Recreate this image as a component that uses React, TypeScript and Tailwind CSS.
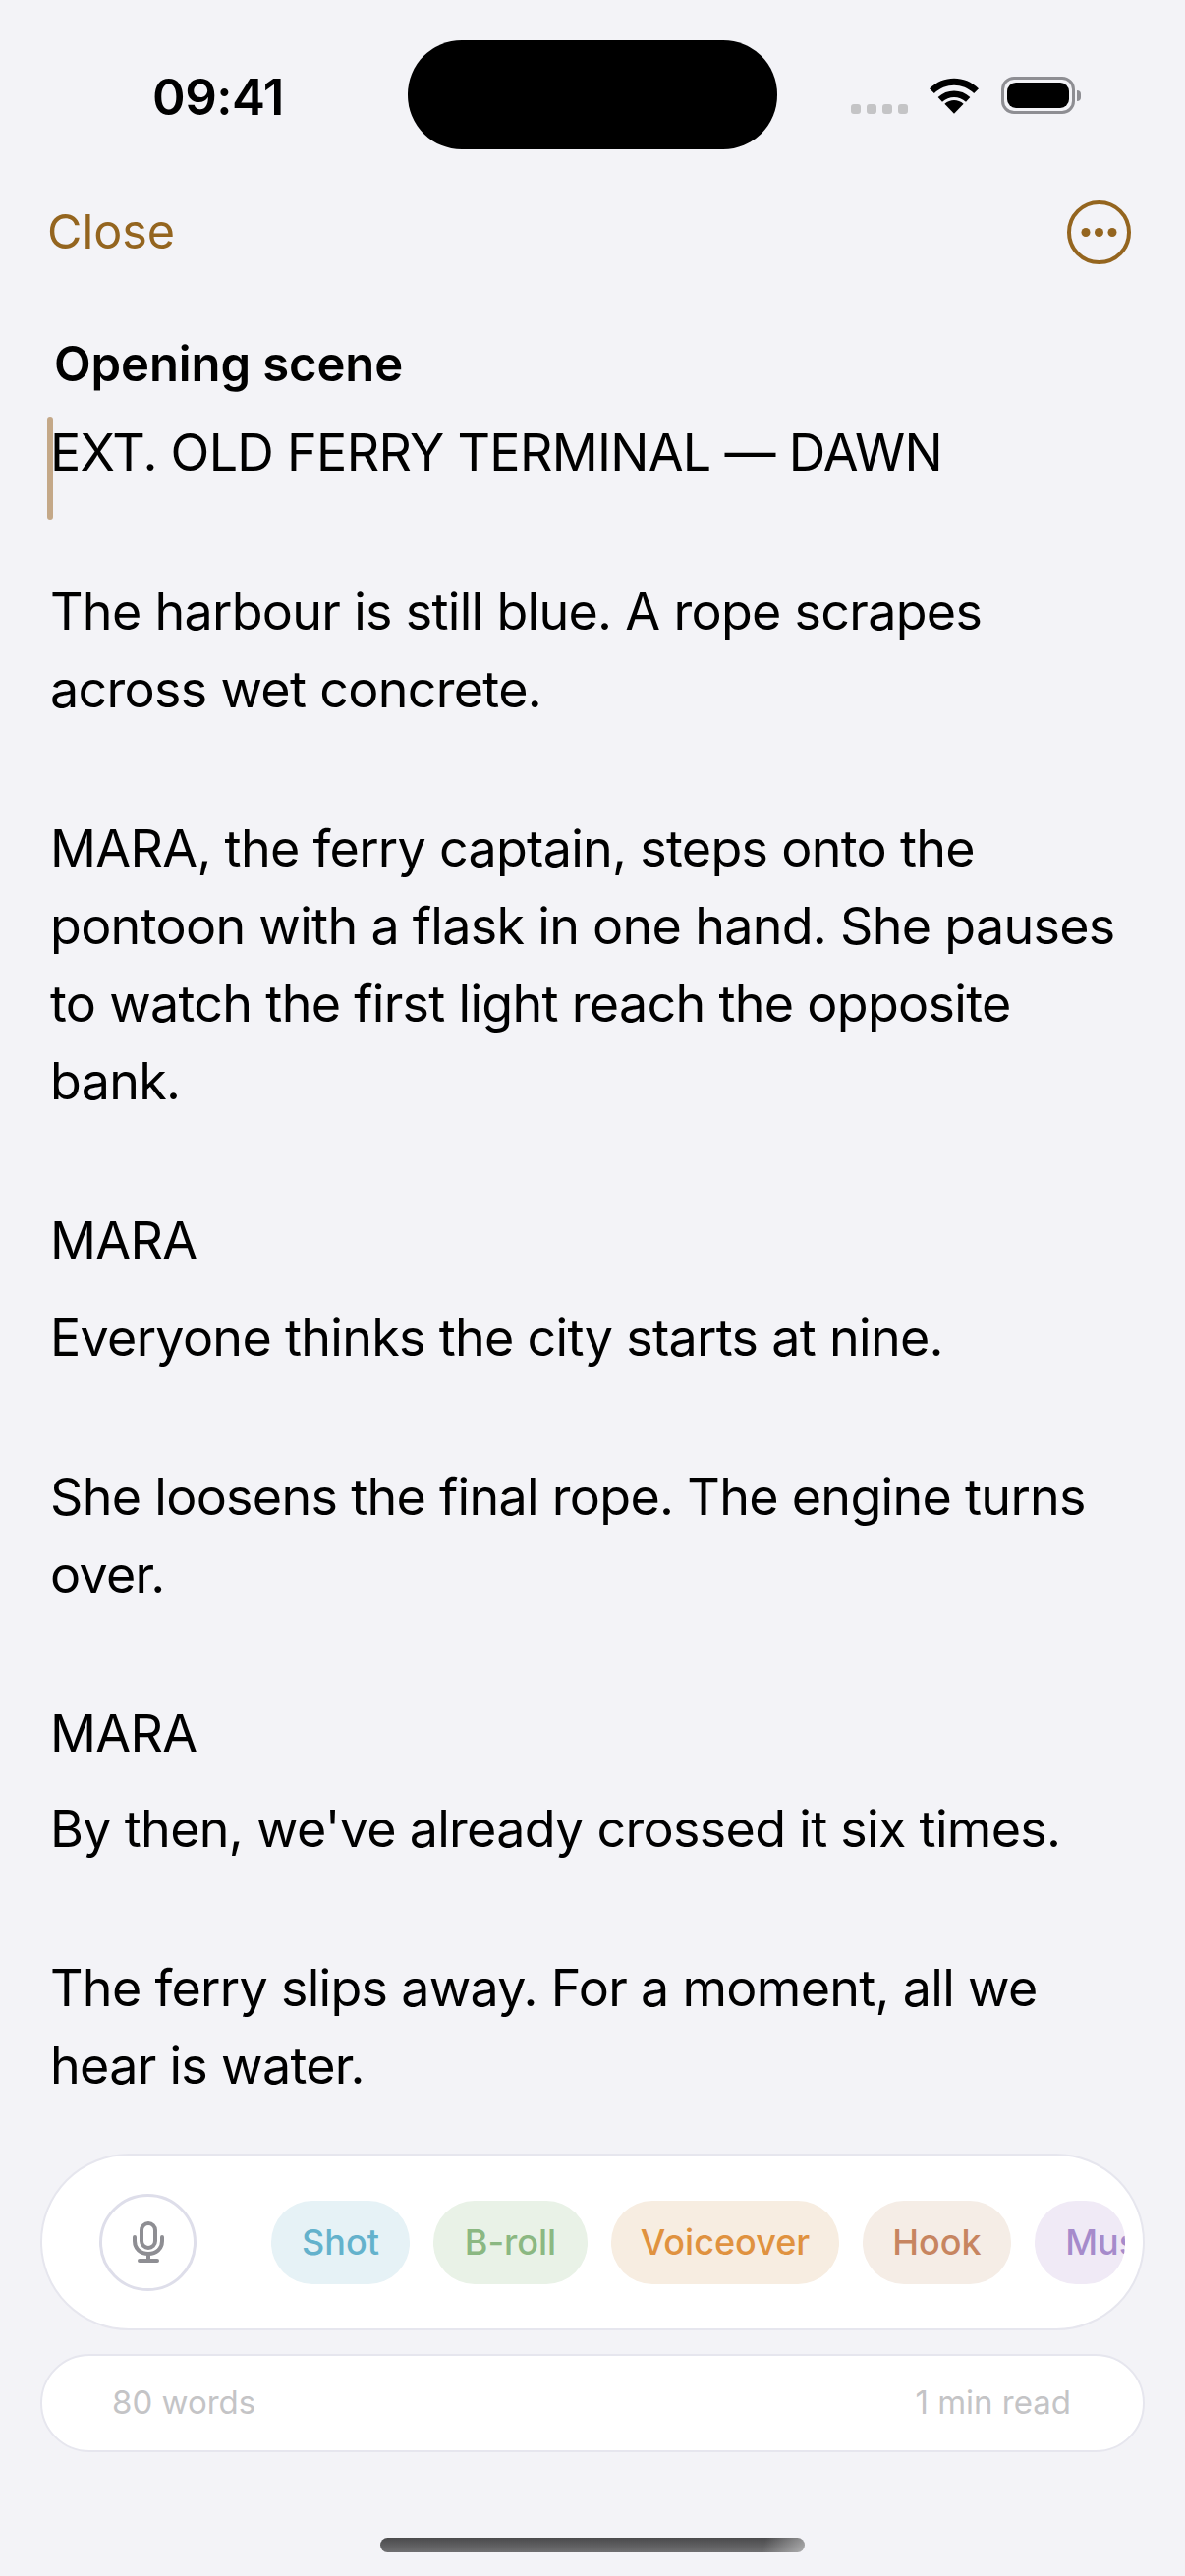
import React from "react";

const font = { fontFamily: "Inter, 'Noto Sans', sans-serif" };

function Wifi() {
  return (
    <svg width="50" height="37" viewBox="0 0 52 38" className="block">
      <path d="M26 38 L16 27.5 C22 22.5 30 22.5 36 27.5 Z" fill="#000" />
      <path d="M9 20.5 C18.5 11.5 33.5 11.5 43 20.5 L38.5 25.5 C31.5 19 20.5 19 13.5 25.5 Z" fill="#000" />
      <path d="M0 11.5 C14.5 -3 37.5 -3 52 11.5 L47 16.5 C35 5 17 5 5 16.5 Z" fill="#000" />
    </svg>
  );
}

function Battery() {
  return (
    <div className="flex items-center ml-[1px]">
      <div className="w-[75px] h-[38px] rounded-[13px] border-[3px] border-[#8e8e93] p-[3px]">
        <div className="w-full h-full rounded-[9px] bg-black" />
      </div>
      <div className="w-[4px] h-[11px] ml-[2px] rounded-r-[4px] bg-[#8e8e93]" />
    </div>
  );
}

function Mic() {
  return (
    <svg width="32" height="42" viewBox="0 0 32 42" fill="none" stroke="#8e8e93" className="block">
      <rect x="9" y="2" width="14" height="25" rx="7" strokeWidth="4" />
      <path d="M2 16 V20 C2 28 8 33 16 33 C24 33 30 28 30 20 V16" strokeWidth="4" strokeLinecap="round" />
      <path d="M16 33 V40" strokeWidth="4" />
      <path d="M7 40 H25" strokeWidth="4" strokeLinecap="round" />
    </svg>
  );
}

const pills = [
  { t: "Shot", c: "w-[141px] bg-[#e6f2f6] text-[#64b2cc]" },
  { t: "B-roll", c: "w-[157px] bg-[#e9f2e7] text-[#8bb882]" },
  { t: "Voiceover", c: "w-[232px] bg-[#f7ede1] text-[#e0923f]" },
  { t: "Hook", c: "w-[151px] bg-[#f5ede6] text-[#c78560]" },
  { t: "Music", c: "w-[166px] bg-[#f0eaf6] text-[#a68bcb]" },
];

export default function App() {
  return (
    <div className="w-[1206px] h-[2622px] bg-[#f3f3f7] flex flex-col overflow-hidden relative text-black" style={font}>
      <div className="h-[111px] mt-[41px] shrink-0 flex items-start pl-[155px] pr-[106px]">
        <div className="w-[260px] mt-[32px] text-[51px] leading-none font-semibold tracking-[-0.5px]">09:41</div>
        <div className="w-[376px] h-[111px] rounded-[55px] bg-black shrink-0" />
        <div className="ml-auto mt-[37px] flex items-center gap-[22px]">
          <div className="flex gap-[6px] mt-[28px]">
            <div className="w-[10px] h-[10px] rounded-[3px] bg-[#c4c4c6]" />
            <div className="w-[10px] h-[10px] rounded-[3px] bg-[#c4c4c6]" />
            <div className="w-[10px] h-[10px] rounded-[3px] bg-[#c4c4c6]" />
            <div className="w-[10px] h-[10px] rounded-[3px] bg-[#c4c4c6]" />
          </div>
          <Wifi />
          <Battery />
        </div>
      </div>

      <div className="flex items-center justify-between pl-[48px] pr-[55px] h-[66px] mt-[51px] shrink-0">
        <span className="text-[48.5px] leading-none text-[#94651f]">Close</span>
        <svg width="65" height="65" viewBox="0 0 65 65" className="block">
          <circle cx="32.5" cy="32.5" r="30.5" fill="none" stroke="#94651f" strokeWidth="4" />
          <circle cx="19" cy="32.5" r="4.5" fill="#94651f" />
          <circle cx="32.5" cy="32.5" r="4.5" fill="#94651f" />
          <circle cx="46" cy="32.5" r="4.5" fill="#94651f" />
        </svg>
      </div>

      <div className="pl-[51px] pr-[40px] flex-1 relative">
        <div className="absolute left-[48px] top-[155px] w-[6px] h-[105px] rounded-full bg-[#c4a888]" />
        <div className="pl-[4px] pt-[72px] text-[49px] leading-[60px] font-semibold tracking-[-0.1px]">Opening scene</div>
        <div className="text-[52px] leading-[79px] mt-[20px] tracking-[-0.7px]">
          <p className="mb-[83px]">EXT. OLD FERRY TERMINAL — DAWN</p>
          <p className="mb-[83px]">The harbour is still blue. A rope scrapes<br />across wet concrete.</p>
          <p className="mb-[83px]">MARA, the ferry captain, steps onto the<br />pontoon with a flask in one hand. She pauses<br />to watch the first light reach the opposite<br />bank.</p>
          <p className="mb-[20px]">MARA</p>
          <p className="mb-[83px]">Everyone thinks the city starts at nine.</p>
          <p className="mb-[83px]">She loosens the final rope. The engine turns<br />over.</p>
          <p className="mb-[18px]">MARA</p>
          <p className="mb-[83px]">By then, we've already crossed it six times.</p>
          <p>The ferry slips away. For a moment, all we<br />hear is water.</p>
        </div>
      </div>

      <div className="px-[41px] shrink-0 flex flex-col gap-[24px]">
        <div className="h-[180px] rounded-[90px] bg-white border-2 border-[#e6e6ee] flex items-center pl-[58px] pr-[18px]">
          <div className="w-[99px] h-[99px] rounded-full border-[3px] border-[#dedeea] flex items-center justify-center shrink-0">
            <Mic />
          </div>
          <div className="ml-[76px] flex-1 flex gap-[24px] overflow-hidden rounded-r-[40px]">
            {pills.map((p) => (
              <div key={p.t} className={`h-[85px] rounded-[42px] shrink-0 flex items-center justify-center text-[36px] font-medium ${p.c}`}>
                {p.t}
              </div>
            ))}
          </div>
        </div>
        <div className="h-[100px] rounded-[50px] bg-white border-2 border-[#e6e6ee] flex items-center justify-between pl-[71px] pr-[73px] text-[33px] text-[#c4c4c6]">
          <span>80 words</span>
          <span>1 min read</span>
        </div>
      </div>

      <div className="h-[126px] shrink-0 flex items-end justify-center pb-[24px]">
        <div className="w-[432px] h-[15px] rounded-[8px] bg-[linear-gradient(105deg,transparent_90%,#ffffff70_100%),linear-gradient(to_bottom,#4a4a4c,#707072)]" />
      </div>
    </div>
  );
}
